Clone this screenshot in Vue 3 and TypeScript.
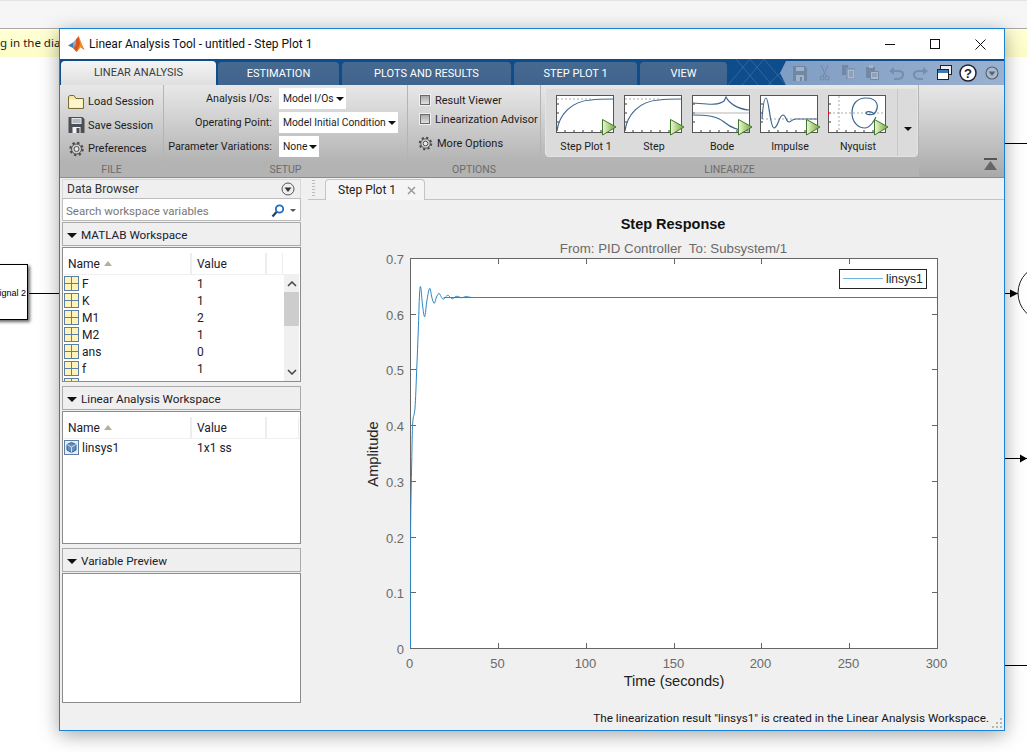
<template>
  <div class="desktop">
    <!-- simulink model behind the window -->
    <div class="top-strip"></div>
    <div class="hint hint-left"><span>g in the dia</span></div>
    <div class="hint hint-right"></div>
    <div class="block"><span>Signal 2</span></div>
    <svg class="model" width="1027" height="752" viewBox="0 0 1027 752">
      <path d="M29 293.5H60M1005 143.5H1027M1005 293.5H1018M1005 458.5H1027M1005 665.5H1027" stroke="#000" fill="none" />
      <path d="M1010 289.5L1018 293.5L1010 297.5Z" fill="#000" />
      <path d="M1020 454.5L1027 458.5L1020 462.5Z" fill="#000" />
      <circle cx="1046" cy="293" r="28" fill="#fff" stroke="#222" />
    </svg>

    <div class="window">
      <div class="titlebar">
        <svg class="logo" width="17" height="17" viewBox="0 0 17 17">
          <path d="M0 9.5L5 6.5L8 8.5L5 12Z" fill="#3f7fb5" />
          <path d="M5 6.5L7.5 4L8 8.5L5 12Z" fill="#7fa8c8" />
          <path d="M7.5 4L10.5 0L14 9L16.5 14L12.5 11L8.5 16L5 12L8 8.5Z" fill="#d9541e" />
          <path d="M10.5 0L12 8L8.5 16L12.5 11L16.5 14L14 9Z" fill="#f08a24" />
        </svg>
        <span class="title">Linear Analysis Tool - untitled - Step Plot 1</span>
        <div class="win-btns">
          <svg width="10" height="10" viewBox="0 0 10 10"><path d="M0 5.5H10" stroke="#111" /></svg>
          <svg width="10" height="10" viewBox="0 0 10 10"><rect x=".5" y=".5" width="9" height="9" fill="none" stroke="#111" /></svg>
          <svg width="11" height="11" viewBox="0 0 11 11"><path d="M.5 .5L10.5 10.5M10.5 .5L.5 10.5" stroke="#111" /></svg>
        </div>
      </div>

      <div class="tabstrip">
        <div v-for="tab in tabs" :key="tab.label" class="tab" :class="{ active: tab.active }" :style="{ width: tab.width + 'px' }">
          {{ tab.label }}
        </div>
        <svg class="hatch" width="60" height="26" viewBox="0 0 60 26">
          <path d="M0 26L22 0M14 26L36 0M30 26L8 0M44 26L22 0M40 26L60 6M58 26L36 0" stroke="#4a7db3" stroke-opacity=".55" fill="none" />
        </svg>
        <div class="qat">
          <svg width="14" height="15" viewBox="0 0 14 15" class="q1 faded">
            <path d="M0 0H12L14 2V15H0Z" fill="#6d7f96" />
            <path d="M3 1H11V5H3ZM3 9H11V15H3Z" fill="#a8b8cc" />
            <rect x="7" y="11" width="2" height="4" fill="#6d7f96" />
          </svg>
          <svg width="11" height="16" viewBox="0 0 11 16" class="q2 faded">
            <path d="M2 0L7 11M9 0L4 11" stroke="#6d7f96" fill="none" />
            <circle cx="3" cy="13" r="2" fill="none" stroke="#6d7f96" />
            <circle cx="8" cy="13" r="2" fill="none" stroke="#6d7f96" />
          </svg>
          <svg width="13" height="14" viewBox="0 0 13 14" class="q3 faded">
            <path d="M0 0H6V3H4V10H0Z" fill="#6d7f96" />
            <path d="M5 4H13V14H5Z" fill="#b3c2d6" stroke="#6d7f96" />
            <path d="M7 7H11M7 9H11M7 11H11" stroke="#6d7f96" />
          </svg>
          <svg width="13" height="15" viewBox="0 0 13 15" class="q4 faded">
            <path d="M0 2H9V6H4V13H0Z" fill="#6d7f96" />
            <rect x="3" y="0" width="4" height="3" fill="#a8b8cc" />
            <path d="M4.500 6.500H12.500V14.500H4.500Z" fill="#b3c2d6" stroke="#6d7f96" />
            <path d="M6 9H11M6 11H11" stroke="#6d7f96" />
          </svg>
          <svg width="15" height="13" viewBox="0 0 15 13" class="q5 faded">
            <path d="M3 4H10C16 4 15 12 9 12H5" stroke="#6d86a4" stroke-width="2" fill="none" />
            <path d="M5 0L0 4L5 8Z" fill="#6d86a4" />
          </svg>
          <svg width="15" height="13" viewBox="0 0 15 13" class="q6 faded">
            <path d="M12 4H5C-1 4 0 12 6 12H10" stroke="#6d86a4" stroke-width="2" fill="none" />
            <path d="M10 0L15 4L10 8Z" fill="#6d86a4" />
          </svg>
          <svg width="15" height="15" viewBox="0 0 15 15" class="q7">
            <rect x="3.500" y=".5" width="11" height="9" fill="#e8edf3" stroke="#222" />
            <rect x=".5" y="4.500" width="11" height="10" fill="#fff" stroke="#222" />
            <rect x="1" y="5" width="10" height="3" fill="#3f78b5" />
          </svg>
          <svg width="18" height="18" viewBox="0 0 18 18" class="q8">
            <circle cx="9" cy="9" r="8" fill="#fff" stroke="#223" stroke-width="1.500" />
            <text x="9" y="13.500" text-anchor="middle" class="help-q">?</text>
          </svg>
          <svg width="14" height="14" viewBox="0 0 14 14" class="q9">
            <circle cx="7" cy="7" r="6" fill="#a9bbd0" stroke="#5a6675" stroke-width="1.200" />
            <path d="M3.500 5.500H10.500L7 10Z" fill="#5a6675" />
          </svg>
        </div>
      </div>

      <div class="ribbon">
        <section class="group g-file">
          <div class="group-body file-list">
            <div class="file-item">
              <svg width="17" height="15" viewBox="0 0 17 15">
                <path d="M.5 2.500V14.500H15.500V4.500H8L6 1.500H2Z" fill="#f7e6a4" stroke="#7a6a3a" />
                <path d="M1.500 5.500H14.500V13.500H1.500Z" fill="#fff6cc" />
              </svg>
              <span>Load Session</span>
            </div>
            <div class="file-item">
              <svg width="17" height="16" viewBox="0 0 16 16">
                <path d="M0 0H14L16 2V16H0Z" fill="#4c4f55" />
                <rect x="3" y="1" width="10" height="6" fill="#dfe3e8" />
                <path d="M4 3H12M4 5H12" stroke="#8a8f96" />
                <rect x="4" y="10" width="8" height="6" fill="#f2f2f2" />
                <rect x="8" y="11" width="3" height="5" fill="#4c4f55" />
              </svg>
              <span>Save Session</span>
            </div>
            <div class="file-item">
              <svg width="17" height="16" viewBox="0 0 16 16">
                <circle cx="8" cy="8" r="6" fill="none" stroke="#4d4d4d" stroke-width="2.400" stroke-dasharray="2.300 2.400" />
                <circle cx="8" cy="8" r="5" fill="#cfcfcf" stroke="#4d4d4d" />
                <circle cx="8" cy="8" r="2.500" fill="#e8e8e8" stroke="#4d4d4d" />
              </svg>
              <span>Preferences</span>
            </div>
          </div>
          <div class="group-label">FILE</div>
        </section>

        <section class="group g-setup">
          <div class="group-body setup-grid">
            <label>Analysis I/Os:</label>
            <div class="combo">Model I/Os<i class="caret"></i></div>
            <label>Operating Point:</label>
            <div class="combo">Model Initial Condition<i class="caret"></i></div>
            <label>Parameter Variations:</label>
            <div class="combo">None<i class="caret"></i></div>
          </div>
          <div class="group-label">SETUP</div>
        </section>

        <section class="group g-options">
          <div class="group-body options-list">
            <div class="check"><i class="box"></i>Result Viewer</div>
            <div class="check"><i class="box"></i>Linearization Advisor</div>
            <div class="more">
              <svg width="15" height="15" viewBox="0 0 16 16">
                <circle cx="8" cy="8" r="6" fill="none" stroke="#4d4d4d" stroke-width="2.400" stroke-dasharray="2.300 2.400" />
                <circle cx="8" cy="8" r="5" fill="#cfcfcf" stroke="#4d4d4d" />
                <circle cx="8" cy="8" r="2.500" fill="#e8e8e8" stroke="#4d4d4d" />
              </svg>
              More Options
            </div>
          </div>
          <div class="group-label">OPTIONS</div>
        </section>

        <section class="group g-linearize">
          <div class="group-body">
            <div class="gallery">
              <div class="tiles">
                <div v-for="t in thumbs" :key="t.label" class="tile">
                  <svg width="62" height="42" viewBox="0 0 62 42">
                    <defs>
                      <linearGradient :id="'play' + t.label.length" x1="0" x2="1" y1="0" y2="0">
                        <stop offset="0" stop-color="#eef6d8" />
                        <stop offset="1" stop-color="#6fa82e" />
                      </linearGradient>
                    </defs>
                    <rect x=".5" y=".5" width="57" height="37" fill="#fff" stroke="#555" />
                    <path d="M1 9H3M1 18H3M1 27H3M9 37V35M18 37V35M27 37V35M36 37V35M45 37V35" stroke="#333" fill="none" />
                    <path v-if="t.guide" :d="t.guide" stroke="#aaa" stroke-dasharray="2 2" fill="none" />
                    <path v-if="t.solid" :d="t.solid" stroke="#b5b5b5" fill="none" />
                    <path :d="t.curve" stroke="#3d6690" stroke-width="1.200" fill="none" />
                    <path v-if="t.label === 'Nyquist'" d="M0 16V20" stroke="#e01020" stroke-width="2" />
                    <path d="M46.500 24.500L60 32L46.500 40Z" :fill="'url(#play' + t.label.length + ')'" stroke="#3f7a2a" />
                  </svg>
                  <span>{{ t.label }}</span>
                </div>
              </div>
              <div class="gallery-more"><i class="caret"></i></div>
            </div>
          </div>
          <div class="group-label">LINEARIZE</div>
        </section>

        <div class="ribbon-rest">
          <svg width="13" height="12" viewBox="0 0 13 12">
            <rect x="0" y="0" width="13" height="2" fill="#555" />
            <path d="M6.500 3L13 12H0Z" fill="#666" />
          </svg>
        </div>
      </div>

      <div class="body">
        <aside class="browser">
          <div class="browser-head">
            <span>Data Browser</span>
            <svg width="14" height="14" viewBox="0 0 14 14">
              <circle cx="7" cy="7" r="6" fill="#eee" stroke="#555" />
              <path d="M3.500 5.500H10.500L7 10Z" fill="#333" />
            </svg>
          </div>
          <div class="search">
            <span>Search workspace variables</span>
            <svg width="14" height="14" viewBox="0 0 14 14">
              <circle cx="8.500" cy="5" r="3.700" fill="#fff" stroke="#1f6fc0" stroke-width="1.800" />
              <path d="M5.500 8L1.500 12.500" stroke="#143f75" stroke-width="2.200" />
            </svg>
            <i class="caret small"></i>
          </div>

          <div class="section-head"><i class="caret wide"></i>MATLAB Workspace</div>
          <div class="ws-table ws-matlab">
            <div class="ws-row-head">
              <div class="col-name">Name<i class="sort"></i></div>
              <div class="col-value">Value</div>
              <div class="col-x"></div>
              <div class="col-y"></div>
            </div>
            <div class="ws-scroll">
              <div class="ws-rows">
                <div v-for="v in variables" :key="v.name" class="ws-row">
                  <svg width="15" height="15" viewBox="0 0 15 15">
                    <rect x=".5" y=".5" width="14" height="14" fill="#fff3b8" stroke="#5c7fa8" />
                    <path d="M.5 7.500H14.500M7.500 .5V14.500" stroke="#5c7fa8" />
                  </svg>
                  <span class="v-name">{{ v.name }}</span>
                  <span class="v-val">{{ v.value }}</span>
                </div>
                <div class="ws-row cut">
                  <svg width="15" height="15" viewBox="0 0 15 15">
                    <rect x=".5" y=".5" width="14" height="14" fill="#fff3b8" stroke="#5c7fa8" />
                    <path d="M7.500 .5V14.500" stroke="#5c7fa8" />
                  </svg>
                </div>
              </div>
              <div class="scrollbar">
                <svg width="10" height="6" viewBox="0 0 10 6" class="arrow-up"><path d="M1 5L5 1L9 5" stroke="#444" stroke-width="1.500" fill="none" /></svg>
                <div class="thumb"></div>
                <svg width="10" height="6" viewBox="0 0 10 6" class="arrow-down"><path d="M1 1L5 5L9 1" stroke="#444" stroke-width="1.500" fill="none" /></svg>
              </div>
            </div>
          </div>

          <div class="section-head gap"><i class="caret wide"></i>Linear Analysis Workspace</div>
          <div class="ws-table ws-linear">
            <div class="ws-row-head">
              <div class="col-name">Name<i class="sort"></i></div>
              <div class="col-value">Value</div>
              <div class="col-x wide"></div>
            </div>
            <div class="ws-row">
              <svg width="15" height="15" viewBox="0 0 15 15">
                <rect x=".5" y=".5" width="14" height="14" fill="#e6edf5" stroke="#5c7fa8" />
                <path d="M7.500 2.500L12 4.500V10L7.500 12.500L3 10V4.500Z" fill="#5f8fc4" stroke="#3c5f88" />
                <path d="M3 4.500L7.500 7L12 4.500M7.500 7V12.500" stroke="#c9dcf0" fill="none" />
              </svg>
              <span class="v-name">linsys1</span>
              <span class="v-val">1x1 ss</span>
            </div>
          </div>

          <div class="section-head gap"><i class="caret wide"></i>Variable Preview</div>
          <div class="preview"></div>
        </aside>

        <main class="doc">
          <div class="doc-tabs">
            <div class="grip"></div>
            <div class="doc-tab">
              <span>Step Plot 1</span>
              <svg width="9" height="9" viewBox="0 0 9 9"><path d="M1 1L8 8M8 1L1 8" stroke="#9a9a9a" stroke-width="1.500" /></svg>
            </div>
          </div>
          <svg class="plot" width="701" height="505" viewBox="303 200 701 505">
            <text x="673" y="229" text-anchor="middle" class="p-title">Step Response</text>
            <text x="673.500" y="253" text-anchor="middle" class="p-sub">From: PID Controller&nbsp; To: Subsystem/1</text>
            <rect x="410.500" y="258.500" width="527" height="390" fill="#fff" stroke="#666" />
            <g stroke="#666" fill="none">
              <path v-for="x in xTicks" :key="x.label" :d="`M${x.x} 648V643M${x.x} 259V264`" />
              <path v-for="y in yTicks" :key="y.label" :d="`M411 ${y.y}H416M937 ${y.y}H932`" />
            </g>
            <text v-for="x in xTicks" :key="'xl' + x.label" :x="x.x - 1" y="668" text-anchor="middle" class="p-tick">{{ x.label }}</text>
            <text v-for="y in yTicks" :key="'yl' + y.label" x="404" :y="y.y + 5" text-anchor="end" class="p-tick">{{ y.label }}</text>
            <text x="674" y="686" text-anchor="middle" class="p-axis">Time (seconds)</text>
            <text transform="translate(378 454) rotate(-90)" text-anchor="middle" class="p-axis">Amplitude</text>
            <path :d="stepPath" fill="none" stroke="#2a86c4" stroke-width="1" />
            <rect x="839.500" y="269.500" width="87" height="19" fill="#fff" stroke="#262626" />
            <path d="M843 278.500H883" stroke="#6cb5e4" />
            <text x="886" y="283" class="p-legend">linsys1</text>
          </svg>
          <div class="status">
            <span>The linearization result "linsys1" is created in the Linear Analysis Workspace.</span>
            <svg width="11" height="11" viewBox="0 0 11 11" class="resize">
              <path d="M8 1h2v2H8zM4 5h2v2H4zM8 5h2v2H8zM0 9h2v2H0zM4 9h2v2H4zM8 9h2v2H8z" fill="#b8b8a8" />
            </svg>
          </div>
        </main>
      </div>
    </div>
  </div>
</template>

<script setup lang="ts">
interface Variable {
  name: string
  value: string
}

const tabs = [
  { label: 'LINEAR ANALYSIS', width: 155, active: true },
  { label: 'ESTIMATION', width: 121 },
  { label: 'PLOTS AND RESULTS', width: 169 },
  { label: 'STEP PLOT 1', width: 123 },
  { label: 'VIEW', width: 87 },
]

const stepCurve = 'M1 36C3 20 15 6 35 5C42 4 50 4 57 4'

const thumbs = [
  { label: 'Step Plot 1', curve: stepCurve, guide: 'M1 4H36' },
  { label: 'Step', curve: stepCurve, guide: 'M1 4H36' },
  {
    label: 'Bode',
    curve: 'M1 8C15 9 26 11 32 6L34 2C37 8 45 14 57 15M1 20C15 20 25 21 32 27C38 32 45 36 57 36',
    solid: 'M1 18H57',
  },
  {
    label: 'Impulse',
    curve: 'M2 24C3 10 4 3 6 3C9 3 10 33 14 33C18 33 19 20 23 20C26 20 26 27 29 27C31 27 32 24 36 24L57 24',
    guide: 'M2 24H57',
  },
  {
    label: 'Nyquist',
    curve: 'M46 19C52 12 50 3 38 3C28 3 24 10 24 18C24 27 30 33 37 33C43 33 46 25 48 22M46 19C44 16 38 16 38 18C38 20 44 20 46 19',
    guide: 'M11 1V37M1 18H57',
  },
]

const variables: Variable[] = [
  { name: 'F', value: '1' },
  { name: 'K', value: '1' },
  { name: 'M1', value: '2' },
  { name: 'M2', value: '1' },
  { name: 'ans', value: '0' },
  { name: 'f', value: '1' },
]

const xTicks = [0, 50, 100, 150, 200, 250, 300].map((v) => ({
  label: String(v),
  x: Math.round(410 + (v * 527) / 300) + 0.5,
}))

const yTicks = ['0', '0.1', '0.2', '0.3', '0.4', '0.5', '0.6', '0.7'].map((label, i) => ({
  label,
  y: Math.round(648 - (i * 390) / 7) + 0.5,
}))

// step response traced from the plot, smoothed with a catmull-rom spline
const stepPoints: [number, number][] = [
  [410.5, 648], [410.6, 533], [411.7, 463], [412.7, 423], [415, 408], [416.7, 370], [418.3, 330],
  [419.5, 295], [420.7, 287], [422.5, 305], [424.7, 316.7], [427, 300], [429.7, 288.3],
  [432, 298], [434.3, 303.3], [436.5, 297], [439, 293.3], [441, 296.5], [443.3, 299.3],
  [445.5, 297], [448, 295.3], [450.5, 297.5], [452.7, 298.7], [455, 297], [457.3, 296.3],
  [460, 297.3], [462, 297.7], [465, 296.8], [467.3, 296.7], [472, 297.5], [480, 297.5], [937, 297.5],
]

const stepPath = stepPoints.reduce((d, p, i, pts) => {
  if (i === 0) return `M${p[0]} ${p[1]}`
  const p0 = pts[i - 2] ?? pts[i - 1]
  const p1 = pts[i - 1]
  const p3 = pts[i + 1] ?? p
  const c1 = [p1[0] + (p[0] - p0[0]) / 6, p1[1] + (p[1] - p0[1]) / 6]
  const c2 = [p[0] - (p3[0] - p1[0]) / 6, p[1] - (p3[1] - p1[1]) / 6]
  if (p1[0] >= 480) return `${d}L${p[0]} ${p[1]}`
  return `${d}C${c1[0]} ${c1[1]} ${c2[0]} ${c2[1]} ${p[0]} ${p[1]}`
}, '')
</script>

<style>
html,
body {
  margin: 0;
  background: #fff;
  overflow: hidden;
}
</style>

<style scoped>
.desktop {
  position: relative;
  width: 1027px;
  height: 752px;
  overflow: hidden;
  background: #fff;
  font-family: Roboto, "Noto Sans", sans-serif;
  font-size: 12px;
  color: #1c1c1c;
}

.top-strip {
  position: absolute;
  left: 0;
  right: 0;
  top: 0;
  height: 29px;
  background: #f6f6f6;
  border-top: 1px solid #e4e4e4;
  border-bottom: 1px solid #a8a8a8;
  box-sizing: border-box;
}

.hint {
  position: absolute;
  top: 30px;
  height: 27px;
  background: linear-gradient(#ffffd4, #fdfdc8);
  line-height: 26px;
  font-size: 11.500px;
  overflow: hidden;
  white-space: nowrap;
}

.hint-left {
  left: 0;
  width: 60px;
  font-family: "Noto Sans", sans-serif;
}

.hint-right {
  left: 1005px;
  right: 0;
}

.block {
  position: absolute;
  left: -20px;
  top: 264px;
  width: 48px;
  height: 56px;
  border: 1px solid #000;
  box-sizing: border-box;
  background: #fff;
  box-shadow: 2px 2px 3px rgba(0, 0, 0, 0.6);
  font-family: "Liberation Sans", sans-serif;
  font-size: 9px;
  line-height: 56px;
  text-align: right;
  padding-right: 1px;
  color: #000;
}

.model {
  position: absolute;
  left: 0;
  top: 0;
}

.window {
  position: absolute;
  left: 59px;
  top: 28px;
  width: 946px;
  height: 703px;
  box-sizing: border-box;
  border: 1px solid #1883d7;
  background: #f0f0f0;
  box-shadow: 0 4px 18px rgba(0, 0, 0, 0.35);
  display: flex;
  flex-direction: column;
  overflow: visible;
}

.titlebar {
  height: 30px;
  flex: none;
  background: #fff;
  display: flex;
  align-items: center;
  padding-left: 8px;
}

.logo {
  margin-right: 4px;
}

.title {
  font-size: 12px;
  color: #111;
}

.win-btns {
  margin-left: auto;
  display: flex;
  align-items: center;
  gap: 35px;
  padding-right: 18px;
}

.tabstrip {
  position: relative;
  height: 26px;
  flex: none;
  background: #0f4c8c;
  display: flex;
  align-items: flex-end;
  gap: 3px;
  padding-left: 1px;
}

.tab {
  height: 23px;
  flex: none;
  box-sizing: border-box;
  border-radius: 4px 4px 0 0;
  background: linear-gradient(#46698f, #3f648e);
  color: #fff;
  font-size: 11px;
  line-height: 24px;
  text-align: center;
}

.tab.active {
  height: 24px;
  background: linear-gradient(#f4f4f4, #dfdfdf);
  color: #3b3b3b;
  margin-right: -1px;
}

.hatch {
  position: absolute;
  left: 668px;
  top: 0;
}

.qat {
  position: absolute;
  right: 0;
  top: 2px;
  width: 224px;
  height: 24px;
  background: linear-gradient(90deg, #7f9dc4, #9ab1cf);
  clip-path: polygon(6px 0, 100% 0, 100% 100%, 6px 100%, 0 50%);
}

.qat svg {
  position: absolute;
}

.qat svg.faded {
  opacity: 0.75;
}

.q1 { left: 13px; top: 5px; }
.q2 { left: 39px; top: 4px; }
.q3 { left: 62px; top: 4px; }
.q4 { left: 86px; top: 4px; }
.q5 { left: 109px; top: 6px; }
.q6 { left: 133px; top: 6px; }
.q7 { left: 157px; top: 4px; }
.q8 { left: 179px; top: 3px; }
.q9 { left: 205px; top: 5px; }

.help-q {
  font-family: "Liberation Sans", sans-serif;
  font-weight: 700;
  font-size: 13px;
  fill: #223;
}

.ribbon {
  height: 93px;
  flex: none;
  display: flex;
  background: linear-gradient(#e8e8e8, #a9a9a9);
  border-bottom: 1px solid #8c8c8c;
  box-sizing: border-box;
  font-size: 11px;
}

.group {
  display: flex;
  flex-direction: column;
  flex: none;
  border-right: 1px solid #b4b4b4;
  box-sizing: border-box;
}

.g-file { width: 104px; }
.g-setup { width: 244px; }
.g-options { width: 133px; }
.g-linearize { width: 378px; }

.group-body {
  height: 78px;
  flex: none;
  box-sizing: border-box;
}

.group-label {
  flex: 1;
  background: #b3b3b3;
  color: #6c6c6c;
  font-size: 10.500px;
  line-height: 14px;
  text-align: center;
}

.ribbon-rest {
  flex: 1;
  position: relative;
}

.ribbon-rest svg {
  position: absolute;
  right: 7px;
  bottom: 7px;
}

.file-list {
  padding: 8px 0 0 8px;
  display: flex;
  flex-direction: column;
  gap: 6px;
}

.file-item {
  display: flex;
  align-items: center;
  gap: 3px;
  height: 17.500px;
}

.setup-grid {
  display: grid;
  grid-template-columns: 108px auto;
  grid-auto-rows: 21px;
  row-gap: 3px;
  column-gap: 7px;
  padding-top: 3px;
  align-items: center;
  justify-items: start;
  white-space: nowrap;
}

.setup-grid label {
  justify-self: end;
  font-size: 10.800px;
}

.combo {
  background: #fff;
  height: 21px;
  line-height: 21px;
  padding: 0 2px 0 4px;
  font-size: 10.300px;
  display: flex;
  align-items: center;
  gap: 2px;
}

.caret {
  display: inline-block;
  width: 0;
  height: 0;
  border-left: 4px solid transparent;
  border-right: 4px solid transparent;
  border-top: 4px solid #111;
}

.caret.small {
  border-left-width: 3px;
  border-right-width: 3px;
  border-top: 3px solid #555;
}

.caret.wide {
  border-left-width: 5px;
  border-right-width: 5px;
  border-top-width: 5px;
  margin-right: 4px;
}

.options-list {
  padding: 7px 0 0 12px;
  display: flex;
  flex-direction: column;
  gap: 3px;
  white-space: nowrap;
}

.check {
  display: flex;
  align-items: center;
  gap: 5px;
  height: 16px;
}

.box {
  width: 8px;
  height: 8px;
  border: 1px solid #6a6a6a;
  outline: 1px solid #f0f0f0;
  background: linear-gradient(#a8a8a8, #e0e0e0);
}

.more {
  display: flex;
  align-items: center;
  gap: 4px;
  height: 18px;
  margin-top: 4px;
  margin-left: -2px;
}

.gallery {
  margin: 3px 0 0 4px;
  width: 373px;
  height: 69px;
  background: #dbdbdb;
  border: 1px solid #e4e4e4;
  border-radius: 4px;
  box-sizing: border-box;
  display: flex;
}

.tiles {
  display: flex;
  width: 352px;
  padding: 6px 0 0 10px;
  box-sizing: border-box;
  border-right: 1px solid #c8c8c8;
}

.tile {
  width: 68px;
  flex: none;
  display: flex;
  flex-direction: column;
}

.tile span {
  width: 60px;
  text-align: center;
  margin-top: 3px;
  font-size: 10.600px;
  white-space: nowrap;
}

.gallery-more {
  flex: 1;
  display: flex;
  align-items: center;
  justify-content: center;
  padding-top: 13px;
}

.body {
  flex: 1;
  display: flex;
  min-height: 0;
}

.browser {
  width: 243px;
  flex: none;
  box-sizing: border-box;
  padding: 1px 2px 0 2px;
  display: flex;
  flex-direction: column;
}

.browser-head {
  height: 19px;
  flex: none;
  display: flex;
  align-items: center;
  justify-content: space-between;
  padding: 0 5px 1px 4px;
  border: 1px solid #d8d8d8;
  border-bottom: 0;
  box-sizing: border-box;
  background: #efefef;
  color: #333;
}

.search {
  height: 23px;
  flex: none;
  background: #fff;
  border: 1px solid #bdbdbd;
  display: flex;
  align-items: center;
  padding: 2px 4px 0 3px;
  box-sizing: border-box;
  color: #777;
  font-size: 11.500px;
}

.search span {
  flex: 1;
}

.search svg {
  margin-right: 5px;
}

.section-head {
  height: 24px;
  flex: none;
  box-sizing: border-box;
  background: #efefef;
  border: 1px solid #ababab;
  display: flex;
  align-items: center;
  padding: 2px 0 0 4px;
  color: #20202c;
  margin-top: 1px;
  font-size: 11.700px;
}

.section-head.gap {
  margin-top: 4px;
}

.ws-table {
  flex: none;
  box-sizing: border-box;
  background: #fff;
  border: 1px solid #8c8c8c;
  margin-top: 1px;
}

.ws-matlab {
  height: 135px;
}

.ws-linear {
  height: 133px;
}

.ws-row-head {
  height: 27px;
  box-sizing: border-box;
  padding-top: 5px;
  display: flex;
  align-items: center;
  border-bottom: 1px solid #f0f0f0;
  color: #20202c;
}

.col-name {
  width: 129px;
  box-sizing: border-box;
  height: 100%;
  padding-left: 5px;
  display: flex;
  align-items: center;
  gap: 4px;
  border-right: 2px solid #ededed;
}

.col-value {
  width: 75px;
  box-sizing: border-box;
  height: 100%;
  padding-left: 5px;
  display: flex;
  align-items: center;
  border-right: 2px solid #ededed;
}

.col-x {
  width: 16px;
  height: 100%;
  box-sizing: border-box;
  border-right: 1px solid #ededed;
}

.col-x.wide {
  width: 32px;
}

.sort {
  width: 0;
  height: 0;
  border-left: 4px solid transparent;
  border-right: 4px solid transparent;
  border-bottom: 5px solid #b0b0a0;
}

.ws-scroll {
  display: flex;
  height: 106px;
  overflow: hidden;
}

.ws-rows {
  flex: 1;
  overflow: hidden;
}

.ws-row {
  height: 17px;
  display: flex;
  align-items: center;
  padding-left: 1px;
  color: #20202c;
}

.v-name {
  margin-left: 3px;
  width: 115px;
}

.scrollbar {
  width: 15px;
  flex: none;
  background: #f0f0f0;
  position: relative;
  margin-right: 1px;
}

.thumb {
  position: absolute;
  left: 0;
  right: 0;
  top: 17px;
  height: 34px;
  background: #cdcdcd;
}

.arrow-up {
  position: absolute;
  left: 3px;
  top: 6px;
}

.arrow-down {
  position: absolute;
  left: 3px;
  bottom: 6px;
}

.preview {
  height: 130px;
  flex: none;
  background: #fff;
  border: 1px solid #8c8c8c;
  box-sizing: border-box;
  margin-top: 1px;
}

.doc {
  flex: 1;
  min-width: 0;
  display: flex;
  flex-direction: column;
  position: relative;
}

.doc-tabs {
  height: 22px;
  flex: none;
  margin-left: 5px;
  box-sizing: border-box;
  border-bottom: 1px solid #c4c4c4;
  display: flex;
  align-items: flex-end;
}

.grip {
  width: 3px;
  height: 17px;
  margin: 0 0 2px 4px;
  background: repeating-linear-gradient(#bbb 0 1px, transparent 1px 3px);
}

.doc-tab {
  width: 100px;
  height: 21px;
  margin-left: 10px;
  margin-bottom: -1px;
  box-sizing: border-box;
  background: #f5f5f5;
  border: 1px solid #c4c4c4;
  border-bottom: 0;
  border-radius: 4px 4px 0 0;
  display: flex;
  align-items: center;
  justify-content: space-between;
  padding: 0 8px 0 12px;
  color: #222;
}

.plot {
  display: block;
  flex: none;
}

.p-title {
  font-family: "Liberation Sans", sans-serif;
  font-weight: 700;
  font-size: 14.500px;
  fill: #111;
}

.p-sub {
  font-family: "Liberation Sans", sans-serif;
  font-size: 13.300px;
  fill: #6a6a6a;
}

.p-tick {
  font-family: "Liberation Sans", sans-serif;
  font-size: 13px;
  fill: #6a6a6a;
}

.p-axis {
  font-family: "Liberation Sans", sans-serif;
  font-size: 14.700px;
  fill: #222;
}

.p-legend {
  font-family: "Liberation Sans", sans-serif;
  font-size: 12px;
  fill: #222;
}

.status {
  flex: 1;
  display: flex;
  align-items: center;
  justify-content: flex-end;
  padding: 1px 15px 0 0;
  position: relative;
  color: #14141e;
  font-size: 11.700px;
}

.resize {
  position: absolute;
  right: 1px;
  bottom: 2px;
}
</style>
